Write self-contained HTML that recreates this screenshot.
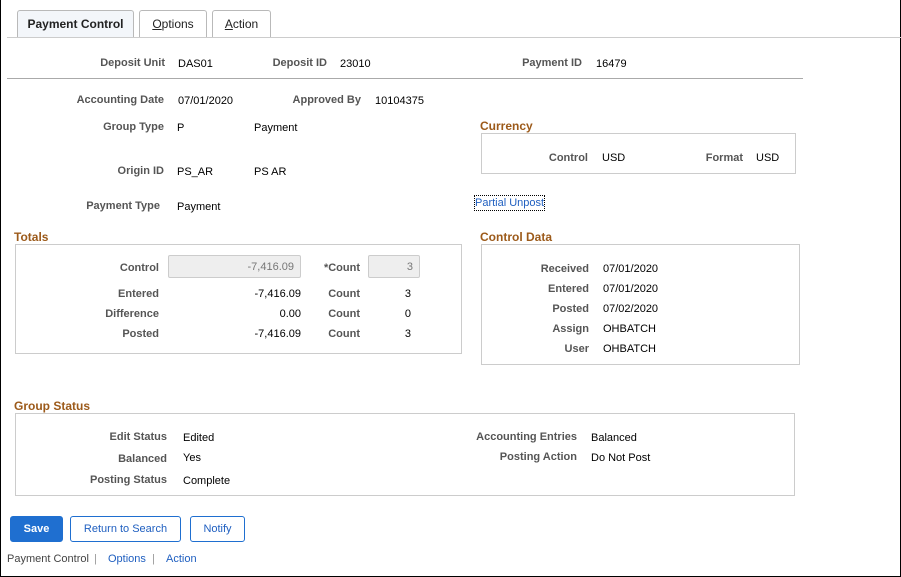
<!DOCTYPE html>
<html><head><style>
*{margin:0;padding:0;box-sizing:border-box}
body{width:901px;height:577px;overflow:hidden;background:#fff;font-family:"Liberation Sans",Arial,sans-serif;font-size:11px;color:#000;position:relative}
#f{position:absolute;left:0;top:0;width:901px;height:577px;border:1px solid #000;border-top:none}
.a{position:absolute;white-space:nowrap;line-height:14px;margin-top:1px}
.l{position:absolute;white-space:nowrap;line-height:14px;color:#555;font-weight:bold;text-align:right;margin-top:1px}
.h{position:absolute;font-size:12px;font-weight:bold;color:#9c5a1a;line-height:14px;margin-top:1px}
.box{position:absolute;border:1px solid #ccc}
.tab{position:absolute;top:10px;height:28px;border:1px solid #b9b9b9;border-bottom:none;border-radius:3px 3px 0 0;background:#fff;font-size:12px;color:#222;text-align:center;line-height:26px}
.btn{position:absolute;top:516px;height:26px;border:1px solid #1f6fd0;border-radius:3px;font-size:11px;text-align:center;line-height:24px;color:#1f5fc0}
.inp{position:absolute;height:23px;background:#eee;border:1px solid #ccc;border-radius:2px;color:#777;text-align:right;line-height:22px;padding-right:6px}
</style></head><body><div id="f"></div>
<div class="tab" style="left:17px;width:117px;background:#f3f6fa;font-weight:bold">Payment Control</div>
<div class="tab" style="left:139px;width:68px"><u>O</u>ptions</div>
<div class="tab" style="left:212px;width:59px"><u>A</u>ction</div>
<div style="position:absolute;left:7px;top:37px;width:894px;height:1px;background:#ccc"></div>

<div class="l" style="right:736px;top:55px">Deposit Unit</div><div class="a" style="left:178px;top:56px">DAS01</div>
<div class="l" style="right:574px;top:55px">Deposit ID</div><div class="a" style="left:340px;top:56px">23010</div>
<div class="l" style="right:319px;top:55px">Payment ID</div><div class="a" style="left:596px;top:56px">16479</div>
<div style="position:absolute;left:7px;top:78px;width:796px;height:1px;background:#aaa"></div>

<div class="l" style="right:737px;top:92px">Accounting Date</div><div class="a" style="left:178px;top:93px">07/01/2020</div>
<div class="l" style="right:540px;top:92px">Approved By</div><div class="a" style="left:375px;top:93px">10104375</div>
<div class="l" style="right:737px;top:119px">Group Type</div><div class="a" style="left:177px;top:120px">P</div><div class="a" style="left:254px;top:120px">Payment</div>
<div class="l" style="right:737px;top:163px">Origin ID</div><div class="a" style="left:177px;top:164px">PS_AR</div><div class="a" style="left:254px;top:164px">PS AR</div>
<div class="l" style="right:741px;top:198px">Payment Type</div><div class="a" style="left:177px;top:199px">Payment</div>

<div class="h" style="left:480px;top:118px">Currency</div>
<div class="box" style="left:481px;top:133px;width:315px;height:41px"></div>
<div class="l" style="right:313px;top:150px">Control</div><div class="a" style="left:602px;top:150px">USD</div>
<div class="l" style="right:158px;top:150px">Format</div><div class="a" style="left:756px;top:150px">USD</div>
<div class="a" style="left:475px;top:195px;color:#1f5fc0;outline:1px dotted #000">Partial Unpost</div>

<div class="h" style="left:14px;top:229px">Totals</div>
<div class="box" style="left:15px;top:244px;width:447px;height:110px"></div>
<div class="l" style="right:742px;top:260px">Control</div>
<div class="inp" style="left:168px;top:255px;width:133px">-7,416.09</div>
<div class="l" style="right:541px;top:260px">*Count</div>
<div class="inp" style="left:368px;top:255px;width:52px">3</div>
<div class="l" style="right:742px;top:286px">Entered</div><div class="a" style="right:600px;top:286px">-7,416.09</div>
<div class="l" style="right:541px;top:286px">Count</div><div class="a" style="right:490px;top:286px">3</div>
<div class="l" style="right:742px;top:306px">Difference</div><div class="a" style="right:600px;top:306px">0.00</div>
<div class="l" style="right:541px;top:306px">Count</div><div class="a" style="right:490px;top:306px">0</div>
<div class="l" style="right:742px;top:326px">Posted</div><div class="a" style="right:600px;top:326px">-7,416.09</div>
<div class="l" style="right:541px;top:326px">Count</div><div class="a" style="right:490px;top:326px">3</div>

<div class="h" style="left:480px;top:229px">Control Data</div>
<div class="box" style="left:481px;top:244px;width:319px;height:121px"></div>
<div class="l" style="right:312px;top:261px">Received</div><div class="a" style="left:603px;top:261px">07/01/2020</div>
<div class="l" style="right:312px;top:281px">Entered</div><div class="a" style="left:603px;top:281px">07/01/2020</div>
<div class="l" style="right:312px;top:301px">Posted</div><div class="a" style="left:603px;top:301px">07/02/2020</div>
<div class="l" style="right:312px;top:321px">Assign</div><div class="a" style="left:603px;top:321px">OHBATCH</div>
<div class="l" style="right:312px;top:341px">User</div><div class="a" style="left:603px;top:341px">OHBATCH</div>

<div class="h" style="left:14px;top:398px">Group Status</div>
<div class="box" style="left:15px;top:413px;width:780px;height:83px"></div>
<div class="l" style="right:734px;top:429px">Edit Status</div><div class="a" style="left:183px;top:430px">Edited</div>
<div class="l" style="right:734px;top:451px">Balanced</div><div class="a" style="left:183px;top:450px">Yes</div>
<div class="l" style="right:734px;top:472px">Posting Status</div><div class="a" style="left:183px;top:473px">Complete</div>
<div class="l" style="right:324px;top:429px">Accounting Entries</div><div class="a" style="left:591px;top:430px">Balanced</div>
<div class="l" style="right:324px;top:449px">Posting Action</div><div class="a" style="left:591px;top:450px">Do Not Post</div>

<div class="btn" style="left:10px;width:53px;background:#1f6fd0;color:#fff;font-weight:bold">Save</div>
<div class="btn" style="left:70px;width:111px">Return to Search</div>
<div class="btn" style="left:190px;width:55px">Notify</div>

<div class="a" style="left:7px;top:551px;color:#444">Payment Control</div>
<div class="a" style="left:94px;top:551px;color:#999">|</div>
<div class="a" style="left:108px;top:551px;color:#1f5fc0">Options</div>
<div class="a" style="left:152px;top:551px;color:#999">|</div>
<div class="a" style="left:166px;top:551px;color:#1f5fc0">Action</div>
</body></html>
